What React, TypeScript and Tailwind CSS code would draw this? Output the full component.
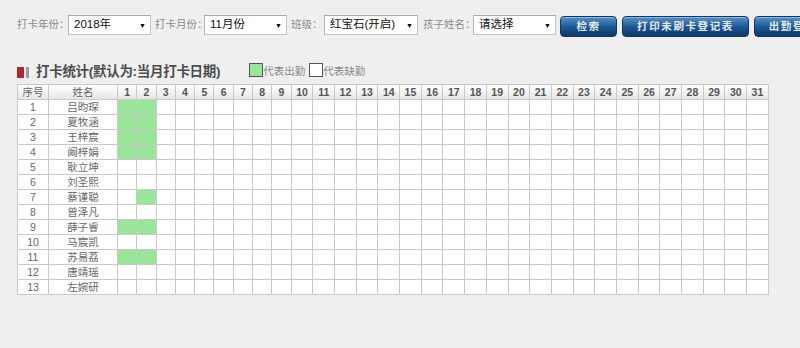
import React from "react";

const names = ["吕昀琛","夏牧涵","王梓宸","阚梓娟","耿立坤","刘圣熙","蔡谨聪","曾泽凡","薛子睿","马宸凯","苏易荔","唐靖瑶","左婉研"];
const green: Record<number, number[]> = { 0: [1, 2], 1: [1, 2], 2: [1, 2], 3: [1, 2], 6: [2], 8: [1, 2], 10: [1, 2] };
const days = Array.from({ length: 31 }, (_, i) => i + 1);

function Select({ text, w }: { text: string; w: string }) {
  return (
    <div className={`${w} h-[20px] bg-white border border-[#c6c6c6] border-t-[#a9a9a9] border-l-[#b5b5b5] flex items-center justify-between pl-[5px] pr-[4px] text-[11.5px] text-[#111]`}>
      <span>{text}</span>
      <span className="text-[7px] text-black leading-none">▼</span>
    </div>
  );
}

function Btn({ text, w }: { text: string; w: string }) {
  return (
    <div className={`${w} h-[21px] shrink-0 rounded-[4px] border border-[#0f3867] bg-gradient-to-b from-[#5a91c7] via-[#1e5a95] to-[#0c3767] flex items-center justify-center text-[10.5px] tracking-[1.6px] text-[#e3ebf3] font-semibold shadow-[inset_0_1px_0_rgba(255,255,255,0.35)]`}>
      {text}
    </div>
  );
}

export default function App() {
  const font = { fontFamily: '"Liberation Sans", "Noto Sans CJK SC", sans-serif' } as React.CSSProperties;
  return (
    <div className="w-[800px] h-[348px] overflow-hidden bg-[#efefef] pt-[15px] pl-[17px]" style={font}>
      <div className="flex items-start whitespace-nowrap w-[900px]">
        <div className="flex items-center h-[20px]">
          <span className="w-[47px] text-[10.5px] text-[#8a8a8a]">打卡年份：</span>
          <div className="ml-[4px]"><Select text="2018年" w="w-[83px]" /></div>
          <span className="ml-[4px] w-[45px] text-[10.5px] text-[#8a8a8a]">打卡月份：</span>
          <div className="ml-[4px]"><Select text="11月份" w="w-[83px]" /></div>
          <span className="ml-[4px] w-[29px] text-[10.5px] text-[#8a8a8a]">班级：</span>
          <div className="ml-[4px]"><Select text="红宝石(开启)" w="w-[94px]" /></div>
          <span className="ml-[5px] w-[46px] text-[10.5px] text-[#8a8a8a]">孩子姓名：</span>
          <div className="ml-[4px]"><Select text="请选择" w="w-[83px]" /></div>
        </div>
        <div className="flex items-center ml-[4px] mt-[1px] gap-[5px]">
          <Btn text="检索" w="w-[57px]" />
          <Btn text="打印未刷卡登记表" w="w-[127px]" />
          <Btn text="出勤登记表" w="w-[90px]" />
        </div>
      </div>

      <div className="flex items-center mt-[25px] h-[20px]">
        <span className="w-[7px] h-[11px] bg-[#b3262d]" />
        <span className="ml-[2px] w-[3px] h-[11px] bg-[#9a9a9a]" />
        <span className="ml-[7px] text-[13.5px] font-bold text-[#4d4d4d] tracking-[-0.3px]">打卡统计(默认为:当月打卡日期)</span>
        <span className="ml-[29px] w-[14px] h-[14px] border border-[#555] bg-[#9ae59a] -mt-[4px]" />
        <span className="text-[10.5px] text-[#8a8a8a]">代表出勤</span>
        <span className="ml-[4px] w-[14px] h-[14px] border border-[#555] bg-white -mt-[4px]" />
        <span className="text-[10.5px] text-[#8a8a8a]">代表缺勤</span>
      </div>

      <table className="mt-[2px] table-fixed border-collapse w-[751px] bg-white text-[10.5px] text-[#666]">
        <colgroup>
          <col className="w-[31px]" />
          <col className="w-[69px]" />
          {days.map((d) => (
            <col key={d} className={d < 10 ? "w-[19.3px]" : "w-[21.7px]"} />
          ))}
        </colgroup>
        <thead>
          <tr className="h-[15px] bg-gradient-to-b from-white to-[#e4e4e4]">
            <th className="border border-[#c9c9c9] p-0 font-normal text-[#666] leading-none">序号</th>
            <th className="border border-[#c9c9c9] p-0 font-normal text-[#666] leading-none">姓名</th>
            {days.map((d) => (
              <th key={d} className="border border-[#c9c9c9] p-0 font-bold text-[#555] leading-none">{d}</th>
            ))}
          </tr>
        </thead>
        <tbody>
          {names.map((n, i) => (
            <tr key={i} className="h-[15px]">
              <td className="border border-[#c9c9c9] p-0 text-center leading-none">{i + 1}</td>
              <td className="border border-[#c9c9c9] p-0 text-center leading-none">{n}</td>
              {days.map((d) => (
                <td
                  key={d}
                  className={`border border-[#c9c9c9] p-0 ${green[i]?.includes(d) ? "bg-[#9ae59a]" : ""}`}
                />
              ))}
            </tr>
          ))}
        </tbody>
      </table>
    </div>
  );
}
